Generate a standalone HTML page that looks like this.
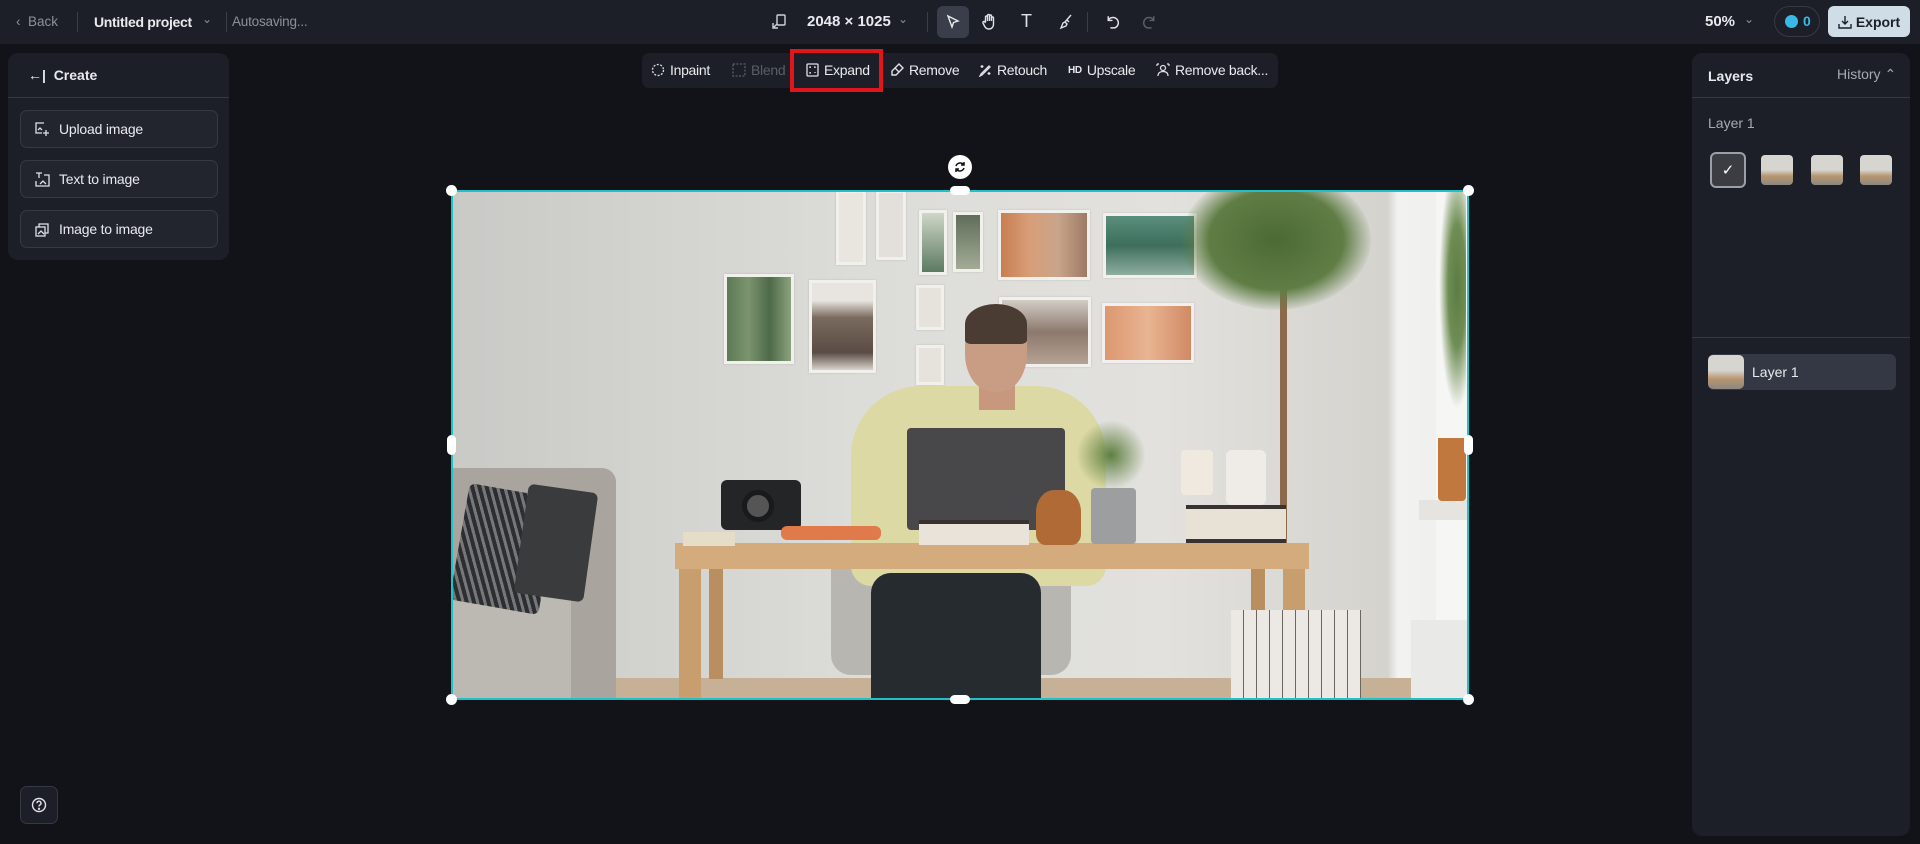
<!DOCTYPE html>
<html><head><meta charset="utf-8"><style>
*{box-sizing:border-box;margin:0;padding:0}
body{width:1920px;height:844px;background:#111318;font-family:"Liberation Sans",sans-serif;color:#e8eaee;position:relative;overflow:hidden;font-size:15px}
.a{position:absolute}
.top{left:0;top:0;width:1920px;height:44px;background:#1c1f27}
.sep{width:1px;height:20px;background:#3a3e48;top:12px}
.panel{background:#1c1f27;border-radius:10px}
.btn{left:12px;width:198px;height:38px;border:1px solid #353944;border-radius:7px;background:#22252e;font-size:14px;display:flex;align-items:center;padding-left:14px;gap:9px;letter-spacing:-0.2px}
.tb{display:flex;align-items:center;gap:5px;font-size:14px;top:62px;letter-spacing:-0.3px}
.ph{position:absolute;border:3px solid #f1f0ec;box-shadow:0 0 2px rgba(0,0,0,.15)}
svg{display:block}
</style></head><body>
<div class="a top"></div>
<div class="a" style="left:16px;top:14px;color:#8c909a;font-size:13.5px">&#8249;&nbsp; Back</div>
<div class="a sep" style="left:77px"></div>
<div class="a" style="left:94px;top:14px;font-size:14px;font-weight:bold;color:#e8eaee;letter-spacing:-0.3px">Untitled project</div>
<div class="a" style="left:202px;top:12px;color:#8c909a;font-size:12px">&#8964;</div>
<div class="a sep" style="left:226px"></div>
<div class="a" style="left:232px;top:14px;color:#8c909a;font-size:13.5px;letter-spacing:-0.2px">Autosaving...</div>
<svg class="a" style="left:771px;top:14px" width="16" height="16" viewBox="0 0 16 16" fill="none" stroke="#cfd2d8" stroke-width="1.4"><rect x="6" y="1" width="8" height="10" rx="1"/><path d="M2 9v5h5M2 14l4-4"/></svg>
<div class="a" style="left:807px;top:13px;font-size:15px;font-weight:bold">2048 × 1025</div>
<div class="a" style="left:898px;top:12px;color:#8c909a;font-size:12px">&#8964;</div>
<div class="a sep" style="left:927px"></div>
<div class="a" style="left:937px;top:6px;width:32px;height:32px;border-radius:6px;background:#3a3e4a"></div>
<svg class="a" style="left:945px;top:14px" width="16" height="16" viewBox="0 0 16 16" fill="none" stroke="#e8eaee" stroke-width="1.4"><path d="M3 2l10 5-4.5 1.5L7 13z"/></svg>
<svg class="a" style="left:981px;top:13px" width="17" height="18" viewBox="0 0 16 18" fill="none" stroke="#dfe1e6" stroke-width="1.4"><path d="M4 9V4a1 1 0 012 0v4M6 8V2.5a1 1 0 012 0V8M8 8V3a1 1 0 012 0v5M10 8V5a1 1 0 012 0v6c0 3-2 5-4.5 5S4 15 3 13l-1.5-3a1 1 0 012-1L4 10"/></svg>
<div class="a" style="left:1021px;top:11px;font-size:18px;color:#dfe1e6">T</div>
<svg class="a" style="left:1058px;top:13px" width="16" height="18" viewBox="0 0 16 18" fill="none" stroke="#dfe1e6" stroke-width="1.4"><path d="M13 2L7 9M7 9l-2 1-2 5 5-2 1-2zM9 7l2 2"/></svg>
<div class="a sep" style="left:1087px"></div>
<svg class="a" style="left:1104px;top:13px" width="17" height="17" viewBox="0 0 16 16" fill="none" stroke="#dfe1e6" stroke-width="1.4"><path d="M4 3v4h4M4 7a5 5 0 116 7H6"/></svg>
<svg class="a" style="left:1141px;top:13px" width="17" height="17" viewBox="0 0 16 16" fill="none" stroke="#5a5e68" stroke-width="1.4"><path d="M12 3v4H8M12 7a5 5 0 10-6 7h4"/></svg>
<div class="a" style="left:1705px;top:13px;font-size:15px;font-weight:bold">50%</div>
<div class="a" style="left:1744px;top:12px;color:#8c909a;font-size:12px">&#8964;</div>
<div class="a" style="left:1774px;top:6px;width:46px;height:31px;border:1px solid #353944;border-radius:16px"></div>
<div class="a" style="left:1785px;top:15px;width:13px;height:13px;border-radius:50%;background:#3ab8e8"></div>
<div class="a" style="left:1803px;top:13px;color:#3ab8e8;font-weight:bold;font-size:14px">0</div>
<div class="a" style="left:1828px;top:6px;width:82px;height:31px;border-radius:6px;background:#cfdde6;color:#1c1f27;font-weight:bold;font-size:14px;display:flex;align-items:center;justify-content:center;gap:4px">
<svg width="14" height="14" viewBox="0 0 14 14" fill="none" stroke="#1c1f27" stroke-width="1.4"><path d="M7 1v8M4 6l3 3 3-3M1 9v4h12V9"/></svg>Export</div>

<div class="a panel" style="left:8px;top:53px;width:221px;height:207px"></div>
<div class="a" style="left:28px;top:67px;font-size:14px;font-weight:bold">&#8592;| &nbsp;Create</div>
<div class="a" style="left:8px;top:97px;width:221px;height:1px;background:#353944"></div>
<div class="a btn" style="left:20px;top:110px"><svg width="15" height="15" viewBox="0 0 15 15" fill="none" stroke="#dfe1e6" stroke-width="1.3"><path d="M9 1H1v10h6M3 8l2-2 2 2M11 8v6M8 11h6"/></svg>Upload image</div>
<div class="a btn" style="left:20px;top:160px"><svg width="15" height="15" viewBox="0 0 15 15" fill="none" stroke="#dfe1e6" stroke-width="1.3"><path d="M1 1h6M4 1v5M9 3h5v11H1V9M5 12l3-3 3 3"/></svg>Text to image</div>
<div class="a btn" style="left:20px;top:210px"><svg width="15" height="15" viewBox="0 0 15 15" fill="none" stroke="#dfe1e6" stroke-width="1.3"><rect x="1" y="5" width="9" height="9"/><path d="M4 5V2h9v9h-3M3 12l3-3 3 3"/></svg>Image to image</div>
<div class="a" style="left:20px;top:786px;width:38px;height:38px;border:1px solid #353944;border-radius:7px;background:#1c1f27;display:flex;align-items:center;justify-content:center"><svg width="16" height="16" viewBox="0 0 16 16" fill="none" stroke="#dfe1e6" stroke-width="1.4"><circle cx="8" cy="8" r="6.5"/><path d="M6 6.2a2 2 0 113 1.7c-.8.4-1 .9-1 1.6"/><circle cx="8" cy="11.8" r=".5"/></svg></div>

<div class="a panel" style="left:642px;top:53px;width:636px;height:35px;border-radius:7px"></div>
<div class="a tb" style="left:651px"><svg width="14" height="14" viewBox="0 0 14 14" fill="none" stroke="#dfe1e6" stroke-width="1.3" stroke-dasharray="2 1.5"><circle cx="7" cy="7" r="5.5"/></svg>Inpaint</div>
<div class="a tb" style="left:732px;color:#5a5e68"><svg width="14" height="14" viewBox="0 0 14 14" fill="none" stroke="#5a5e68" stroke-width="1.3" stroke-dasharray="2 1.5"><rect x="1" y="1" width="12" height="12"/></svg>Blend</div>
<div class="a" style="left:790px;top:49px;width:93px;height:43px;border:4px solid #e0161b"></div>
<div class="a tb" style="left:806px"><svg width="13" height="14" viewBox="0 0 13 14" fill="none" stroke="#dfe1e6" stroke-width="1.3"><rect x="1" y="1" width="11" height="12" rx="1"/><path d="M4 5v-1h1M9 10v-1M8 4h1v1M4 9v1h1" /></svg>Expand</div>
<div class="a tb" style="left:890px"><svg width="14" height="14" viewBox="0 0 14 14" fill="none" stroke="#dfe1e6" stroke-width="1.4"><path d="M9 1l4 4-7 7H2v-4zM5 5l4 4"/></svg>Remove</div>
<div class="a tb" style="left:978px"><svg width="14" height="14" viewBox="0 0 14 14" fill="none" stroke="#dfe1e6" stroke-width="1.3"><path d="M11 3L3 11l-1 2 2-1 8-8zM4 2v3M2.5 3.5h3M11 9v3M9.5 10.5h3"/></svg>Retouch</div>
<div class="a tb" style="left:1068px"><b style="font-size:10px">HD</b> Upscale</div>
<div class="a tb" style="left:1156px"><svg width="14" height="14" viewBox="0 0 14 14" fill="none" stroke="#dfe1e6" stroke-width="1.2"><circle cx="7" cy="5" r="2.5"/><path d="M2 13c0-3 2-4.5 5-4.5s5 1.5 5 4.5M1 1h2M11 1h2M1 1v2M13 1v2"/></svg>Remove back...</div>

<div class="a" style="left:948px;top:155px;width:24px;height:24px;border-radius:50%;background:#fff;display:flex;align-items:center;justify-content:center"><svg width="14" height="14" viewBox="0 0 14 14" fill="none" stroke="#111" stroke-width="1.5"><path d="M11 5a4.5 4.5 0 00-8 1M3 9a4.5 4.5 0 008-1M11 2v3H8M3 12V9h3"/></svg></div>

<div class="a" style="left:451px;top:190px;width:1018px;height:510px;overflow:hidden;background:linear-gradient(90deg,#c9c9c6 0%,#dcdcd8 40%,#e2e1dd 70%,#d4d3ce 92%,#f2f2f0 93%,#eeeeec 100%)">
 <div class="a" style="left:0;top:488px;width:1018px;height:22px;background:#c7b196"></div>
 <div class="ph" style="left:273px;top:84px;width:70px;height:90px;background:linear-gradient(90deg,#5b7a55,#7c9470,#4d6a48,#8ca27d)"></div>
 <div class="ph" style="left:358px;top:90px;width:67px;height:93px;background:linear-gradient(#e8e5e0 20%,#7a6a5e 40%,#5a4c45 80%,#d9d4cc)"></div>
 <div class="ph" style="left:385px;top:0px;width:30px;height:75px;background:#e9e6e0"></div>
 <div class="ph" style="left:425px;top:0px;width:30px;height:70px;background:#e3dfda"></div>
 <div class="ph" style="left:468px;top:20px;width:28px;height:65px;background:linear-gradient(#cfd6c8,#5c7a60)"></div>
 <div class="ph" style="left:502px;top:22px;width:30px;height:60px;background:linear-gradient(#5f6d5a,#a3ab95)"></div>
 <div class="ph" style="left:547px;top:20px;width:92px;height:70px;background:linear-gradient(90deg,#c87e52,#d89e78,#c9a48b,#9e7a66)"></div>
 <div class="ph" style="left:652px;top:23px;width:94px;height:65px;background:linear-gradient(#5a8e7c,#3e6e5d,#8fae9e)"></div>
 <div class="ph" style="left:548px;top:107px;width:92px;height:70px;background:linear-gradient(#d2cdc6,#8c786c,#b4a294)"></div>
 <div class="ph" style="left:651px;top:113px;width:92px;height:60px;background:linear-gradient(90deg,#dc9770,#e8b592,#d08a64)"></div>
 <div class="ph" style="left:465px;top:95px;width:28px;height:45px;background:#e6e2dc"></div>
 <div class="ph" style="left:465px;top:155px;width:28px;height:40px;background:#e6e2dc"></div>
 <div class="a" style="left:985px;top:0;width:33px;height:510px;background:#f6f6f5"></div>
 <div class="a" style="left:968px;top:310px;width:50px;height:20px;background:#e6e4e0"></div>
 <div class="a" style="left:985px;top:0;width:30px;height:240px;background:radial-gradient(ellipse at 70% 40%,#5d7c44 0%,#6f8e55 30%,transparent 60%)"></div>
 <div class="a" style="left:987px;top:248px;width:28px;height:63px;background:#c0783f;border-radius:0 0 4px 4px"></div>
 <div class="a" style="left:960px;top:430px;width:58px;height:80px;background:#e9e9e7"></div>
 <div class="a" style="left:829px;top:60px;width:7px;height:300px;background:#8d6b4a"></div>
 <div class="a" style="left:730px;top:-20px;width:190px;height:140px;border-radius:50%;background:radial-gradient(ellipse,#4c6a35 0%,#5f7d44 50%,rgba(95,125,68,0) 72%)"></div>
 <div class="a" style="left:0;top:278px;width:165px;height:232px;background:#a9a49d;border-radius:0 14px 0 0"></div>
 <div class="a" style="left:0;top:398px;width:120px;height:112px;background:#bcb8b2;border-radius:0 10px 0 0"></div>
 <div class="a" style="left:8px;top:300px;width:90px;height:118px;background:repeating-linear-gradient(65deg,#2d2e30 0 4px,#76777a 4px 7px);border-radius:6px;transform:rotate(10deg)"></div>
 <div class="a" style="left:70px;top:298px;width:70px;height:110px;background:#3a3b3d;border-radius:6px;transform:rotate(8deg)"></div>
 <div class="a" style="left:380px;top:355px;width:240px;height:130px;background:#b8b6b0;border-radius:20px"></div>
 <div class="a" style="left:400px;top:196px;width:255px;height:200px;background:#dcd9a4;border-radius:70px 70px 20px 20px"></div>
 <div class="a" style="left:528px;top:190px;width:36px;height:30px;background:#c7977e"></div>
 <div class="a" style="left:514px;top:117px;width:62px;height:85px;background:#c99d83;border-radius:45%"></div>
 <div class="a" style="left:514px;top:114px;width:62px;height:40px;background:#4a3c33;border-radius:50% 50% 10% 10%"></div>
 <div class="a" style="left:420px;top:383px;width:170px;height:127px;background:#262b30;border-radius:20px 20px 0 0"></div>
 <div class="a" style="left:456px;top:238px;width:158px;height:102px;background:#48484b;border-radius:4px"></div>
 <div class="a" style="left:224px;top:353px;width:634px;height:26px;background:#d3ab7c"></div>
 <div class="a" style="left:228px;top:379px;width:22px;height:131px;background:#c99e6e"></div>
 <div class="a" style="left:832px;top:379px;width:22px;height:131px;background:#c99e6e"></div>
 <div class="a" style="left:258px;top:379px;width:14px;height:110px;background:#b98e60"></div>
 <div class="a" style="left:800px;top:379px;width:14px;height:110px;background:#b98e60"></div>
 <div class="a" style="left:270px;top:290px;width:80px;height:50px;background:#242527;border-radius:6px"></div>
 <div class="a" style="left:291px;top:300px;width:32px;height:32px;background:#555;border-radius:50%;border:5px solid #1a1a1a"></div>
 <div class="a" style="left:330px;top:336px;width:100px;height:14px;background:#e07a4a;border-radius:6px"></div>
 <div class="a" style="left:232px;top:342px;width:52px;height:14px;background:#e6ddc9"></div>
 <div class="a" style="left:468px;top:330px;width:110px;height:25px;background:#e9e3da;border-top:4px solid #3a3030"></div>
 <div class="a" style="left:585px;top:300px;width:45px;height:55px;background:#b06a35;border-radius:40% 40% 20% 20%"></div>
 <div class="a" style="left:640px;top:298px;width:45px;height:56px;background:#9d9ea0;border-radius:4px"></div>
 <div class="a" style="left:625px;top:230px;width:70px;height:70px;border-radius:50%;background:radial-gradient(#5f8040,rgba(95,128,64,0) 70%)"></div>
 <div class="a" style="left:735px;top:315px;width:100px;height:38px;background:#e8e1d5;border-top:4px solid #3a3232;border-bottom:4px solid #3a3232"></div>
 <div class="a" style="left:775px;top:260px;width:40px;height:55px;background:#efece8;border-radius:6px"></div>
 <div class="a" style="left:730px;top:260px;width:32px;height:45px;background:#efe9df;border-radius:4px"></div>
 <div class="a" style="left:780px;top:420px;width:130px;height:90px;background:repeating-linear-gradient(90deg,#ece9e4 0 12px,#6b665e 12px 13px)"></div>
</div>
<div class="a" style="left:451px;top:190px;width:1018px;height:510px;border:2px solid #1fc3c7"></div>
<div class="a" style="left:446px;top:185px;width:11px;height:11px;border-radius:50%;background:#fff"></div>
<div class="a" style="left:1463px;top:185px;width:11px;height:11px;border-radius:50%;background:#fff"></div>
<div class="a" style="left:446px;top:694px;width:11px;height:11px;border-radius:50%;background:#fff"></div>
<div class="a" style="left:1463px;top:694px;width:11px;height:11px;border-radius:50%;background:#fff"></div>
<div class="a" style="left:950px;top:186px;width:20px;height:9px;border-radius:5px;background:#fff"></div>
<div class="a" style="left:950px;top:695px;width:20px;height:9px;border-radius:5px;background:#fff"></div>
<div class="a" style="left:447px;top:435px;width:9px;height:20px;border-radius:5px;background:#fff"></div>
<div class="a" style="left:1464px;top:435px;width:9px;height:20px;border-radius:5px;background:#fff"></div>

<div class="a panel" style="left:1692px;top:53px;width:218px;height:783px"></div>
<div class="a" style="left:1708px;top:68px;font-size:14px;font-weight:bold">Layers</div>
<div class="a" style="left:1837px;top:66px;font-size:14px;color:#a6aab3">History &#8963;</div>
<div class="a" style="left:1692px;top:97px;width:218px;height:1px;background:#353944"></div>
<div class="a" style="left:1708px;top:115px;font-size:14px;color:#a6aab3">Layer 1</div>
<div class="a" style="left:1710px;top:152px;width:36px;height:36px;border:2px solid #9aa0a8;border-radius:6px;background:#3b3d42;display:flex;align-items:center;justify-content:center;color:#fff;font-size:15px">&#10003;</div>
<div class="a" style="left:1761px;top:155px;width:32px;height:30px;border-radius:4px;background:linear-gradient(#d7d5d0 50%,#b89670 70%,#8c8880)"></div>
<div class="a" style="left:1811px;top:155px;width:32px;height:30px;border-radius:4px;background:linear-gradient(#d7d5d0 50%,#b89670 70%,#8c8880)"></div>
<div class="a" style="left:1860px;top:155px;width:32px;height:30px;border-radius:4px;background:linear-gradient(#d7d5d0 50%,#b89670 70%,#8c8880)"></div>
<div class="a" style="left:1692px;top:337px;width:218px;height:1px;background:#353944"></div>
<div class="a" style="left:1708px;top:354px;width:188px;height:36px;border-radius:6px;background:#343844"></div>
<div class="a" style="left:1708px;top:355px;width:36px;height:34px;border-radius:5px;background:linear-gradient(#d7d5d0 45%,#b89670 70%,#8c8880)"></div>
<div class="a" style="left:1752px;top:364px;font-size:14px">Layer 1</div>
</body></html>
